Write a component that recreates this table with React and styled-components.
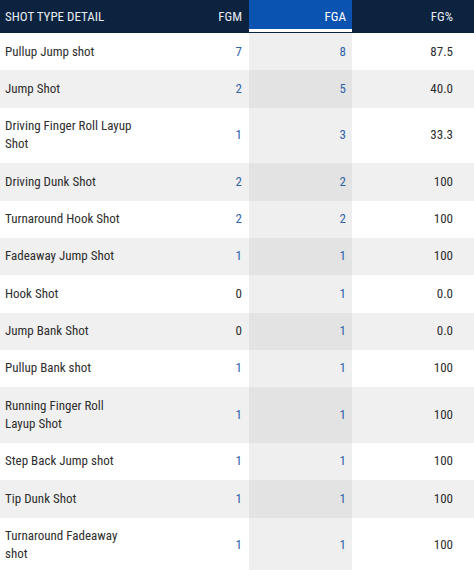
import React from 'react';
import styled, { createGlobalStyle, css } from 'styled-components';

const GlobalStyle = createGlobalStyle`
  html, body {
    margin: 0;
    padding: 0;
    background: #ffffff;
  }
  body {
    font-family: 'Roboto Condensed', Roboto, 'Liberation Sans', sans-serif;
  }
`;

const Table = styled.div`
  width: 474px;
  font-family: 'Roboto Condensed', Roboto, 'Liberation Sans', sans-serif;
`;

// name | FGM | FGA | FG%
const cols = css`
  display: grid;
  grid-template-columns: 150px 99px 103px 1fr;
`;

const HeadRow = styled.div`
  ${cols}
  height: 33px;
  background: #0c2340;
  border-bottom: 1px solid #0c2340;
  box-sizing: border-box;
`;

const HeadCell = styled.div`
  display: flex;
  align-items: center;
  justify-content: ${(p) => (p.$left ? 'flex-start' : 'flex-end')};
  padding: ${(p) => p.$pad || '0 5px'};
  color: #e6eaf0;
  font-size: 13px;
  text-transform: uppercase;
  box-sizing: border-box;
  ${(p) =>
    p.$active &&
    css`
      background: #0b53b0;
      border-bottom: 3px solid #ffffff;
      color: #ffffff;
    `}
`;

const Row = styled.div`
  ${cols}
  background: ${(p) => (p.$alt ? '#f0f0f0' : '#ffffff')};
  color: #2e2e2e;
  font-size: 13px;
  line-height: 18.33px;
`;

const Cell = styled.div`
  display: flex;
  align-items: center;
  justify-content: ${(p) => (p.$left ? 'flex-start' : 'flex-end')};
  padding: ${(p) => p.$pad || '9.5px 5px'};
  box-sizing: border-box;
  ${(p) =>
    p.$active &&
    css`
      background: ${p.$alt ? '#e3e3e3' : '#efefef'};
    `}
`;

const Num = styled.span`
  color: ${(p) => (p.$link ? '#2f64a8' : '#2e2e2e')};
`;

const rows = [
  ['Pullup Jump shot', 7, 8, '87.5'],
  ['Jump Shot', 2, 5, '40.0'],
  ['Driving Finger Roll Layup Shot', 1, 3, '33.3'],
  ['Driving Dunk Shot', 2, 2, '100'],
  ['Turnaround Hook Shot', 2, 2, '100'],
  ['Fadeaway Jump Shot', 1, 1, '100'],
  ['Hook Shot', 0, 1, '0.0'],
  ['Jump Bank Shot', 0, 1, '0.0'],
  ['Pullup Bank shot', 1, 1, '100'],
  ['Running Finger Roll Layup Shot', 1, 1, '100'],
  ['Step Back Jump shot', 1, 1, '100'],
  ['Tip Dunk Shot', 1, 1, '100'],
  ['Turnaround Fadeaway shot', 1, 1, '100'],
];

export default function App() {
  return (
    <>
      <GlobalStyle />
      <Table>
        <HeadRow>
          <HeadCell $left>Shot Type Detail</HeadCell>
          <HeadCell $pad="0 7px 0 0">FGM</HeadCell>
          <HeadCell $active $pad="3px 6px 0 0">FGA</HeadCell>
          <HeadCell $pad="0 21px 0 0">FG%</HeadCell>
        </HeadRow>
        {rows.map(([name, fgm, fga, pct], i) => {
          const alt = i % 2 === 1;
          return (
            <Row key={name} $alt={alt}>
              <Cell $left $pad="9.5px 16px 9.5px 5px">{name}</Cell>
              <Cell $pad="9.5px 7px 9.5px 0">
                <Num $link={fgm > 0}>{fgm}</Num>
              </Cell>
              <Cell $active $alt={alt} $pad="9.5px 6px 9.5px 0">
                <Num $link>{fga}</Num>
              </Cell>
              <Cell $pad="9.5px 21px 9.5px 0">
                <Num>{pct}</Num>
              </Cell>
            </Row>
          );
        })}
      </Table>
    </>
  );
}
